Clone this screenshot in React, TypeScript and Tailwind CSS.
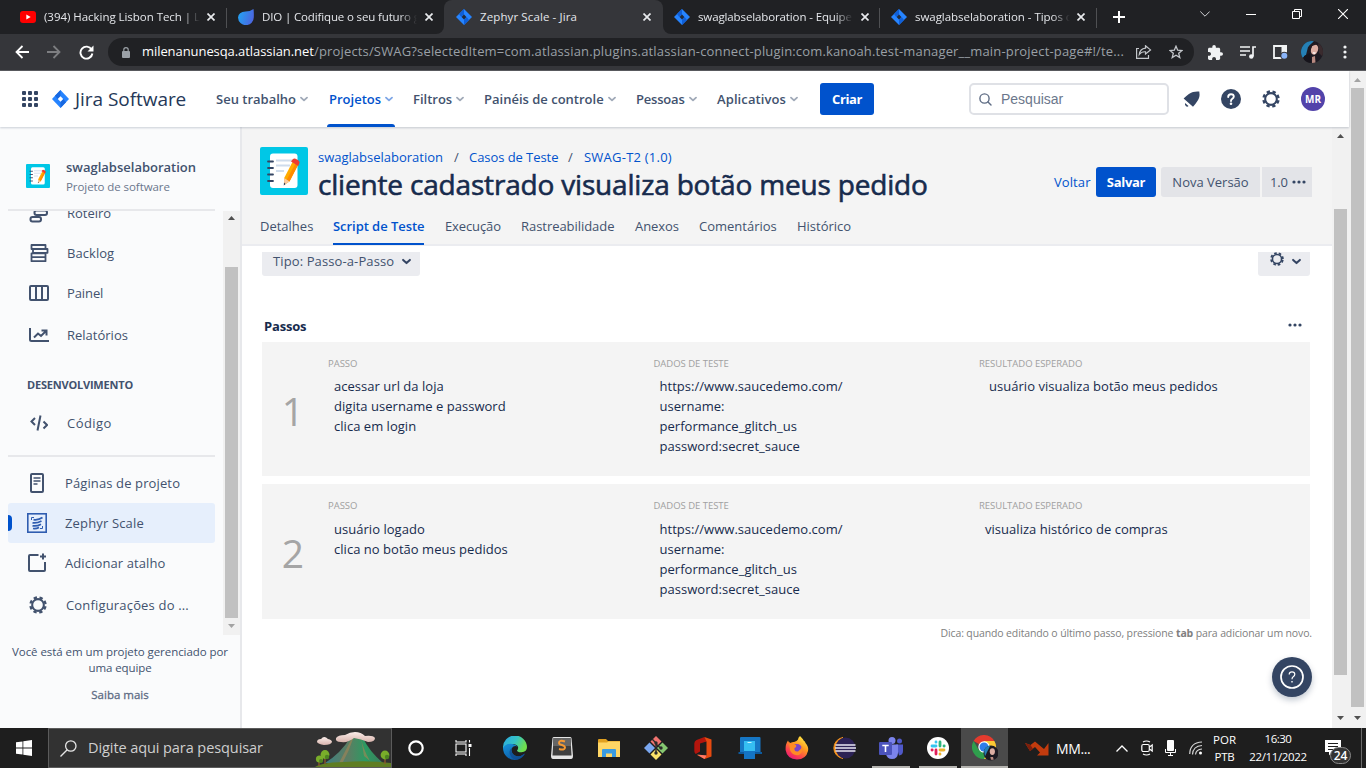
import type { ReactNode } from "react";

const OS = "font-['Open_Sans','Noto_Sans',sans-serif]";

/* ---------- shared icons ---------- */

function JiraTabMark() {
  return (
    <svg width="16" height="16" viewBox="0 0 16 16" className="shrink-0">
      <path d="M8 0L16 8L8 16L0 8Z" fill="#2684ff" />
      <path d="M8 0L8 5.3L5.3 8L3 5Z" fill="#0f5fd8" />
      <path d="M8 16L8 10.7L10.7 8L13 11Z" fill="#0f5fd8" />
      <path d="M8 5.6L10.4 8L8 10.4L5.6 8Z" fill="#202a3c" />
    </svg>
  );
}

function Gear({ size, color = "#344563" }: { size: number; color?: string }) {
  return (
    <svg width={size} height={size} viewBox="0 0 20 20" fill="none" stroke={color} className="shrink-0">
      <circle cx="10" cy="10" r="6.5" strokeWidth="2.3" />
      <circle cx="10" cy="10" r="8.400" strokeWidth="2.600" strokeDasharray="3.700 2.897" strokeDashoffset="-1.450" />
    </svg>
  );
}

function Chevron({ color, size = 8 }: { color: string; size?: number }) {
  return (
    <svg width={size} height={size} viewBox="0 0 8 8" fill="none" stroke={color} strokeWidth="1.800" strokeLinecap="round" strokeLinejoin="round" className="shrink-0">
      <path d="M1 2.6L4 5.4L7 2.6" />
    </svg>
  );
}

function Notebook({ size }: { size: number }) {
  return (
    <svg width={size} height={size} viewBox="0 0 48 48" className="shrink-0">
      <rect width="48" height="48" rx="2" fill="#00c7e6" />
      <rect x="10" y="6.5" width="27.5" height="34.5" rx="3" fill="#fff" />
      <path d="M16 13.5H34M16 18.5H30M16 24H24" stroke="#cfdcec" strokeWidth="1.8" />
      <path d="M8 14.500H13M8 21H13M8 27.500H13M8 34H13" stroke="#344563" strokeWidth="1.8" strokeLinecap="round" />
      <path d="M32.500 15L38 18L29.500 34.500L24 38L24.200 31Z" fill="#ffab00" />
      <path d="M35.500 16.600L38 18L29.500 34.500L26.500 33Z" fill="#ff8b00" />
      <path d="M24.200 31L29.500 34.500L24 38Z" fill="#fbc9a0" />
      <path d="M24 35.500L25.500 37L23.800 38.500Z" fill="#253858" />
      <path d="M31 14.500L33 12Q34.500 11 37 12.500Q40 14 39.500 16L38.200 19Z" fill="#ee3d2f" />
    </svg>
  );
}

function Portrait({ size }: { size: number }) {
  return (
    <svg width={size} height={size} viewBox="0 0 22 22" className="shrink-0">
      <clipPath id="portrait"><circle cx="11" cy="11" r="11" /></clipPath>
      <g clipPath="url(#portrait)">
        <rect width="22" height="22" fill="#1d1a22" />
        <path d="M0 0H13L7 6L5 14L0 18Z" fill="#2580b5" />
        <path d="M17 2L22 6V16L18 12Z" fill="#3a2b2e" />
        <ellipse cx="13.500" cy="8.500" rx="3.600" ry="5.200" fill="#dcaea3" transform="rotate(14 13.500 8.500)" />
        <path d="M8 5Q12 0 17 3L11 5L9 11Z" fill="#221a20" />
        <path d="M11.500 11.200L15 11.500L13 13.200Z" fill="#fff" />
        <path d="M11 16L14 15L14.500 22H11Z" fill="#b88a80" />
        <path d="M3 15L9 12L10 22H3Z" fill="#16141b" />
      </g>
    </svg>
  );
}

function Close() {
  return (
    <svg width="8" height="8" viewBox="0 0 8 8" stroke="#e8eaed" strokeWidth="1.700" className="shrink-0">
      <path d="M0.500 0.500L7.500 7.500M7.500 0.500L0.500 7.500" />
    </svg>
  );
}

function Arrow({ up, color = "#505050" }: { up?: boolean; color?: string }) {
  return (
    <svg width="7" height="4" viewBox="0 0 7 4" className="shrink-0">
      <path d={up ? "M0 4L3.500 0L7 4Z" : "M0 0L3.500 4L7 0Z"} fill={color} />
    </svg>
  );
}

function Dots() {
  return (
    <svg width="14" height="4" viewBox="0 0 14 4" fill="#344563" className="shrink-0">
      <circle cx="2" cy="2" r="1.600" />
      <circle cx="7" cy="2" r="1.600" />
      <circle cx="12" cy="2" r="1.600" />
    </svg>
  );
}

/* ---------- browser chrome ---------- */

function TabStrip() {
  const text = "overflow-hidden whitespace-pre text-[11.5px] leading-4 text-[#e4e6ea]";
  const fade = "[mask-image:linear-gradient(to_right,#000_calc(100%-18px),transparent)]";
  return (
    <div className="flex h-[34px] shrink-0 bg-[#35363a]">
      <div className="flex w-[444px] shrink-0 rounded-br-lg bg-[#202124]">
        <div className="flex w-[226px] items-center pl-5">
          <svg width="16" height="12" viewBox="0 0 16 12" className="shrink-0">
            <rect width="16" height="12" rx="3" fill="#f00" />
            <path d="M6.300 3.500L10.700 6L6.300 8.500Z" fill="#fff" />
          </svg>
          <span className={`${text} ${fade} ml-2 w-[156px] tracking-[-0.04px]`}>(394) Hacking Lisbon Tech | Li</span>
          <span className="ml-[7px]"><Close /></span>
        </div>
        <div className="mt-2 h-5 w-px bg-[#4f5053]" />
        <div className="flex w-[217px] items-center pl-[11px]">
          <svg width="16" height="16" viewBox="0 0 16 16" className="shrink-0">
            <defs>
              <linearGradient id="dio" x1="0" y1="0" x2="1" y2="0.300">
                <stop offset="0" stopColor="#1fa8f5" />
                <stop offset="1" stopColor="#4a68e0" />
              </linearGradient>
            </defs>
            <path d="M7.500 2.500Q12 2.500 15.500 0Q16 3 15.800 8A7.600 7.600 0 0 1 0 8.500Q0.500 3 7.500 2.500Z" fill="url(#dio)" />
          </svg>
          <span className={`${text} ${fade} ml-[8px] w-[155px] tracking-[-0.14px]`}>DIO | Codifique o seu futuro g</span>
          <span className="ml-[8px]"><Close /></span>
        </div>
      </div>
      <div className="w-[219px] shrink-0 bg-[linear-gradient(#202124_50%,#35363a_50%)]">
        <div className="flex h-[34px] items-center rounded-t-lg bg-[#35363a] pl-[12px]">
          <JiraTabMark />
          <span className={`${text} ml-[8px] w-[155px] tracking-[0.11px]`}>Zephyr Scale - Jira</span>
          <span className="ml-[8px]"><Close /></span>
        </div>
      </div>
      <div className="flex flex-1 rounded-bl-lg bg-[#202124]">
        <div className="flex w-[216px] items-center pl-[11px]">
          <JiraTabMark />
          <span className={`${text} ${fade} ml-[8px] w-[155px] tracking-[-0.12px]`}>swaglabselaboration - Equipe</span>
          <span className="ml-[8px]"><Close /></span>
        </div>
        <div className="mt-2 h-5 w-px bg-[#4f5053]" />
        <div className="flex w-[216px] items-center pl-[11px]">
          <JiraTabMark />
          <span className={`${text} ${fade} ml-[8px] w-[155px] tracking-[-0.04px]`}>swaglabselaboration - Tipos d</span>
          <span className="ml-[7px]"><Close /></span>
        </div>
        <div className="mt-2 h-5 w-px bg-[#4f5053]" />
        <svg width="12" height="12" viewBox="0 0 12 12" stroke="#fff" strokeWidth="2" className="ml-4 mt-[11px] shrink-0">
          <path d="M6 0V12M0 6H12" />
        </svg>
        <div className="ml-auto flex h-7 items-center pr-[18px]">
          <svg width="10" height="6" viewBox="0 0 10 6" fill="none" stroke="#d0d2d5" className="mr-9"><path d="M0.300 0.500L5 5.200L9.700 0.500" /></svg>
          <svg width="10" height="10" viewBox="0 0 10 10" stroke="#fff" className="mr-9"><path d="M0 5.500H10" /></svg>
          <svg width="10" height="10" viewBox="0 0 10 10" fill="none" stroke="#fff" className="mr-9"><path d="M0.500 2.500H7.500V9.500H0.500ZM2.500 2.500V0.500H9.500V7.500H7.500" /></svg>
          <svg width="10" height="10" viewBox="0 0 10 10" stroke="#fff" strokeWidth="1.100"><path d="M0 0L10 10M10 0L0 10" /></svg>
        </div>
      </div>
    </div>
  );
}

function Toolbar() {
  return (
    <div className="flex h-[37px] shrink-0 items-center border-b border-[#5a5b5f] bg-[#35363a] pl-[15px]">
      <svg width="14" height="14" viewBox="0 0 14 14" fill="none" stroke="#fff" strokeWidth="1.800"><path d="M14 7H1.500M7.500 1L1.500 7L7.500 13" /></svg>
      <svg width="14" height="14" viewBox="0 0 14 14" fill="none" stroke="#7d7e81" strokeWidth="1.800" className="ml-[18px]"><path d="M0 7H12.500M6.500 1L12.500 7L6.500 13" /></svg>
      <svg width="15" height="15" viewBox="0 0 15 15" fill="none" className="ml-[18px]">
        <path d="M12.600 4.500A6 6 0 1 0 13.400 8.500" stroke="#fff" strokeWidth="1.900" />
        <path d="M14.500 0.500V6.500H8.500Z" fill="#fff" />
      </svg>
      <div className="ml-[14px] flex h-7 w-[1086px] shrink-0 items-center rounded-full bg-[#202124] pl-[14px]">
        <svg width="8" height="11" viewBox="0 0 8 11" className="shrink-0">
          <rect y="4" width="8" height="7" rx="1" fill="#9aa0a6" />
          <path d="M1.800 4.500V2.800A2.200 2.200 0 0 1 6.200 2.800V4.500" stroke="#9aa0a6" strokeWidth="1.200" fill="none" />
        </svg>
        <span className="ml-3 w-[172px] shrink-0 whitespace-nowrap text-[13px] tracking-[-0.07px] text-white">milenanunesqa.atlassian.net</span>
        <span className="w-[822px] shrink-0 whitespace-nowrap text-[13px] tracking-[0.16px] text-[#9aa0a6]">/projects/SWAG?selectedItem=com.atlassian.plugins.atlassian-connect-plugin:com.kanoah.test-manager__main-project-page#!/te...</span>
        <svg width="16" height="14" viewBox="0 0 16 14" fill="none" stroke="#c4c7cb" strokeWidth="1.200" className="shrink-0">
          <path d="M3 3.500H0.600V13.400H12.500V10" />
          <path d="M9.500 0.800L14.500 4.900L9.500 9V6.800Q5.500 6.500 3.300 9.500Q4 3.800 9.500 3.200Z" />
        </svg>
        <svg width="14" height="14" viewBox="0 0 14 14" fill="none" stroke="#c4c7cb" strokeWidth="1.300" className="ml-[17px] shrink-0">
          <path d="M7 1.200L8.700 5.200L13 5.500L9.700 8.300L10.800 12.600L7 10.300L3.200 12.600L4.300 8.300L1 5.500L5.300 5.200Z" />
        </svg>
      </div>
      <svg width="15" height="15" viewBox="2 1 21 21" fill="#f1f3f4" className="ml-[14px] shrink-0">
        <path d="M20.500 11H19V7c0-1.100-.9-2-2-2h-4V3.500a2.500 2.500 0 0 0-5 0V5H4c-1.100 0-2 .9-2 2v3.800h1.500c1.500 0 2.700 1.200 2.700 2.700S5 16.200 3.500 16.200H2V20c0 1.100.9 2 2 2h3.800v-1.500c0-1.500 1.200-2.700 2.700-2.700s2.700 1.200 2.700 2.700V22H17c1.100 0 2-.9 2-2v-4h1.500a2.500 2.500 0 0 0 0-5z" />
      </svg>
      <svg width="16" height="13" viewBox="0 0 16 13" fill="none" stroke="#f1f3f4" strokeWidth="1.700" className="ml-[17px] shrink-0">
        <path d="M0 1H10M0 5H10M0 9H6M13 10.500V1H16" />
        <circle cx="11.300" cy="10.600" r="1.400" fill="#f1f3f4" />
      </svg>
      <svg width="15" height="14" viewBox="0 0 15 14" className="ml-[17px] shrink-0">
        <path d="M1 1H13V13H1Z" fill="none" stroke="#f1f3f4" strokeWidth="1.800" />
        <path d="M8.500 0H14V8H8.500Z" fill="#f1f3f4" />
        <circle cx="11.300" cy="10.700" r="3.900" fill="#35363a" />
        <circle cx="11.300" cy="10.700" r="3" fill="#8ab4f8" />
      </svg>
      <div className="ml-[13px]"><Portrait size={22} /></div>
      <svg width="4" height="14" viewBox="0 0 4 14" fill="#f1f3f4" className="ml-5 shrink-0">
        <circle cx="2" cy="2" r="1.600" /><circle cx="2" cy="7" r="1.600" /><circle cx="2" cy="12" r="1.600" />
      </svg>
    </div>
  );
}

/* ---------- Jira top navigation ---------- */

function NavItem({ width, active, children }: { width: string; active?: boolean; children: ReactNode }) {
  return (
    <div className={`relative flex h-14 shrink-0 items-center gap-1 whitespace-nowrap text-[13px] font-semibold ${width} ${active ? "text-[#0052cc]" : "text-[#42526e]"}`}>
      <span className="pt-[2px]">{children}</span>
      <Chevron color={active ? "#7ea6e6" : "#a0a9b8"} />
      {active && <div className="absolute bottom-0 -left-[2px] h-[3px] w-[68px] rounded-t-sm bg-[#0052cc]" />}
    </div>
  );
}

function TopNav() {
  return (
    <div className="z-10 flex h-[56px] shrink-0 items-center bg-white pl-[22px] shadow-[0_1px_2px_rgba(9,30,66,0.2)]">
      <svg width="16" height="16" viewBox="0 0 16 16" fill="#344563" className="shrink-0">
        {[0, 6, 12].map((y) => [0, 6, 12].map((x) => <rect key={`${x}-${y}`} x={x} y={y} width="4" height="4" rx="1" />))}
      </svg>
      <div className="ml-[14px] flex w-[164px] items-center">
        <svg width="17" height="18" viewBox="0 0 17 18" className="shrink-0">
          <path d="M8.500 0L17 9L8.500 18L0 9Z" fill="#2684ff" />
          <path d="M8.500 0V6L5.700 9L3 5.800Z" fill="#1868e0" />
          <path d="M8.500 18V12L11.300 9L14 12.200Z" fill="#1868e0" />
          <path d="M8.500 6.200L11.200 9L8.500 11.800L5.800 9Z" fill="#fff" />
        </svg>
        <span className="ml-[6px] whitespace-nowrap text-[19px] leading-6 tracking-[-0.05px] text-[#253858]">Jira Software</span>
      </div>
      <NavItem width="w-[113px]">Seu trabalho</NavItem>
      <NavItem width="w-[84px]" active>Projetos</NavItem>
      <NavItem width="w-[71px]">Filtros</NavItem>
      <NavItem width="w-[152px]">Painéis de controle</NavItem>
      <NavItem width="w-[81px] tracking-[-0.2px]">Pessoas</NavItem>
      <NavItem width="w-[103px] tracking-[0.1px]">Aplicativos</NavItem>
      <div className="flex h-8 w-[54px] shrink-0 items-center justify-center rounded-[3px] bg-[#0052cc] pt-[2px] text-[13px] font-bold tracking-[-0.4px] text-white">Criar</div>
      <div className="ml-[95px] flex h-8 w-[200px] shrink-0 items-center rounded-[5px] border-2 border-[#dfe1e6] pl-2 font-['Liberation_Sans',sans-serif] text-sm text-[#6b778c]">
        <svg width="13" height="13" viewBox="0 0 13 13" fill="none" stroke="#5e6c84" strokeWidth="1.400" strokeLinecap="round"><circle cx="5.500" cy="5.500" r="4.600" /><path d="M9 9L12 12" /></svg>
        <span className="ml-[9px]">Pesquisar</span>
      </div>
      <svg width="17" height="17" viewBox="0 0 17 17" fill="#344563" className="ml-[14px] shrink-0">
        <path d="M16.300 0.600Q16.800 4 16.300 6Q15.500 9.500 10 15.800L0.600 7.600Q6.500 1.800 10 1Q13 0.300 16.300 0.600Z" />
        <path d="M2 12L5.500 15Q4.500 16.300 3 15.300Q1.500 14 2 12Z" />
      </svg>
      <svg width="20" height="20" viewBox="0 0 20 20" className="ml-[21px] shrink-0">
        <circle cx="10" cy="10" r="10" fill="#344563" />
        <path d="M7.200 8Q7.200 5.200 10 5.200Q12.800 5.200 12.800 7.600Q12.800 9.100 11.200 9.900Q10 10.500 10 12" fill="none" stroke="#fff" strokeWidth="1.900" strokeLinecap="round" />
        <circle cx="10" cy="14.800" r="1.300" fill="#fff" />
      </svg>
      <span className="ml-[21px]"><Gear size={18} /></span>
      <div className="ml-[21px] flex h-6 w-6 shrink-0 items-center justify-center rounded-full bg-[#5243aa] text-[10px] font-bold text-white">MR</div>
    </div>
  );
}

/* ---------- sidebar ---------- */

const sideText = "whitespace-nowrap text-[13px] leading-5 text-[#42526e]";

function SideItem({ icon, height, textClass, children }: { icon: ReactNode; height: string; textClass: string; children: ReactNode }) {
  return (
    <div className={`flex shrink-0 items-center ${height}`}>
      <div className="flex w-[76px] shrink-0 justify-center">{icon}</div>
      <span className={`${sideText} ${textClass}`}>{children}</span>
    </div>
  );
}

function Sidebar() {
  return (
    <aside className="flex w-[242px] shrink-0 flex-col border-r-2 border-[#e7e8eb] bg-[#fafbfc]">
      <div className="flex h-[82px] shrink-0 items-start pl-[26px] pt-[30px]">
        <div className="mt-[7px]"><Notebook size={24} /></div>
        <div className="ml-4 flex flex-col">
          <span className="text-[13px] font-semibold leading-[20px] text-[#42526e]">swaglabselaboration</span>
          <span className="text-[11.5px] leading-[19px] tracking-[-0.07px] text-[#6b778c]">Projeto de software</span>
        </div>
      </div>
      <div className="ml-2 h-[2px] w-[207px] shrink-0 bg-[#e7e8eb]" />
      <div className="flex h-[424px] shrink-0 overflow-hidden">
        <div className="flex w-[223px] shrink-0 flex-col overflow-hidden">
          <div className="-mt-[18px] flex flex-col">
            <SideItem height="h-[40px]" textClass="ml-[-9px]" icon={
              <svg width="20" height="20" viewBox="0 0 20 20" fill="none" stroke="#42526e" strokeWidth="2"><rect x="6.500" y="7.500" width="12.500" height="4.500" rx="2" /><rect x="2.500" y="14" width="10.500" height="4.500" rx="2" /></svg>
            }>Roteiro</SideItem>
            <SideItem height="h-[40px]" textClass="ml-[-9px] tracking-[0.05px]" icon={
              <svg width="20" height="20" viewBox="0 0 20 20" fill="none" stroke="#42526e" strokeWidth="1.800" strokeLinejoin="round" className="ml-px"><path d="M2.500 2H16.500V6H2.500ZM4 6H18.500V9.800H4ZM2.500 10.300H16.500V14.200H2.500ZM2.500 14.200H16.500V18.200H2.500Z" /></svg>
            }>Backlog</SideItem>
            <SideItem height="h-[40px]" textClass="ml-[-9px] tracking-[-0.1px]" icon={
              <svg width="20" height="16" viewBox="0 0 20 16" fill="none" stroke="#42526e" strokeWidth="2" className="ml-[2px]"><rect x="1" y="1" width="18" height="14" rx="1" /><path d="M7 1V15M13 1V15" /></svg>
            }>Painel</SideItem>
            <SideItem height="h-[44px]" textClass="ml-[-9px]" icon={
              <svg width="20" height="14" viewBox="0 0 20 14" fill="none" stroke="#42526e" strokeWidth="2" className="ml-[2px]"><path d="M1 0V11.500Q1 13 2.500 13H20" /><path d="M5 9.500L9 5.500L12 8L17 3M12.500 2.500H17.500V7.500" /></svg>
            }>Relatórios</SideItem>
            <div className="flex h-[56px] items-center pl-[27px] text-[11px] font-bold tracking-[-0.2px] text-[#42526e]">DESENVOLVIMENTO</div>
            <SideItem height="h-[20px]" textClass="ml-[-9px] tracking-[0.45px]" icon={
              <svg width="18" height="16" viewBox="0 0 18 16" fill="none" stroke="#42526e" strokeWidth="2" className="ml-[2px]"><path d="M5 3L1.500 6.500L5 10M10.500 0.500L7.500 15.500M13.500 6.500L17 10L13.500 13.500" /></svg>
            }>Código</SideItem>
            <div className="ml-2 mt-[22px] h-[2px] w-[207px] bg-[#e7e8eb]" />
            <div className="h-[6px]" />
            <SideItem height="h-[40px]" textClass="ml-[-11px] tracking-[0.12px]" icon={
              <svg width="14" height="20" viewBox="0 0 14 20" fill="none" stroke="#42526e" strokeWidth="2" className="mr-[2px]"><rect x="1" y="1" width="12" height="18" rx="1" /><path d="M3.500 5H10.500M3.500 8H10.500M3.500 11H7.500" strokeWidth="1.500" /></svg>
            }>Páginas de projeto</SideItem>
            <div className="ml-2 flex h-[40px] w-[207px] items-center rounded-[3px] bg-[#e6effc]">
              <div className="h-4 w-1 rounded-r-sm bg-[#0052cc]" />
              <svg width="20" height="20" viewBox="0 0 20 20" fill="none" stroke="#2f5db0" className="ml-[15px] shrink-0">
                <rect x="0.800" y="0.800" width="18.400" height="18.400" strokeWidth="1.600" />
                <path d="M4.500 7V4.500H7M15.500 13V15.500H13" strokeWidth="1" />
                <path d="M6.500 6.600Q11 7.500 15.500 4.500M5.500 9.800Q10 10.500 14.500 8M5.500 12.800Q10 13.500 14 11.200M6 15.500Q9 16 12 14.500" strokeWidth="1.700" />
              </svg>
              <span className={`${sideText} ml-[18px] tracking-[0.15px]`}>Zephyr Scale</span>
            </div>
            <SideItem height="h-[40px]" textClass="ml-[-11px] tracking-[0.1px]" icon={
              <svg width="20" height="20" viewBox="0 0 20 20" fill="none" stroke="#42526e" strokeWidth="2" className="mr-[2px]"><path d="M11.500 2H3Q2 2 2 3V17Q2 18 3 18H17Q18 18 18 17V9" /><path d="M16 0.500V6.500M13 3.500H19" /></svg>
            }>Adicionar atalho</SideItem>
            <SideItem height="h-[44px]" textClass="ml-[-10px] tracking-[0.17px]" icon={<div className="mr-px"><Gear size={18} color="#42526e" /></div>}>Configurações do ...</SideItem>
          </div>
        </div>
        <div className="flex w-[17px] shrink-0 flex-col items-center bg-[#f1f1f1] pt-[5px]">
          <Arrow up />
          <div className="mt-[47px] h-[351px] w-[13px] shrink-0 bg-[#c1c1c1]" />
          <div className="mt-[6px]"><Arrow color="#a3a3a3" /></div>
        </div>
      </div>
      <div className="mt-[9px] flex flex-col items-center whitespace-nowrap text-center text-[11.5px] leading-4 text-[#42526e]">
        <span className="tracking-[-0.06px]">Você está em um projeto gerenciado por</span>
        <span className="tracking-[-0.1px]">uma equipe</span>
        <span className="mt-[11px] text-[#5e6c84] [-webkit-text-stroke:0.3px]">Saiba mais</span>
      </div>
    </aside>
  );
}

/* ---------- main content ---------- */

type Step = { n: string; height: string; gap: string; numPad: string; passo: string[]; dados: string[]; resultado: string; resPad: string };

const steps: Step[] = [
  {
    n: "1", height: "h-[134px]", gap: "mt-[5px]", numPad: "pt-[4px]",
    passo: ["acessar url da loja", "digita username e password", "clica em login"],
    dados: ["https://www.saucedemo.com/", "username:", "performance_glitch_us", "password:secret_sauce"],
    resultado: "usuário visualiza botão meus pedidos", resPad: "pl-[10px]",
  },
  {
    n: "2", height: "h-[135px]", gap: "mt-[6px]", numPad: "pt-[4px]",
    passo: ["usuário logado", "clica no botão meus pedidos"],
    dados: ["https://www.saucedemo.com/", "username:", "performance_glitch_us", "password:secret_sauce"],
    resultado: "visualiza histórico de compras", resPad: "pl-[6px]",
  },
];

function StepColumn({ label, lines, gap, pad, width }: { label: string; lines: string[]; gap: string; pad: string; width: string }) {
  return (
    <div className={`flex shrink-0 flex-col pt-[15px] ${width}`}>
      <span className="whitespace-nowrap text-[9.5px] leading-[14px] tracking-[-0.03px] text-[#a0a0a0]">{label}</span>
      <div className={`flex flex-col whitespace-nowrap text-[13px] leading-5 tracking-[0.03px] text-[#172b4d] ${gap} ${pad}`}>
        {lines.map((l) => <span key={l}>{l}</span>)}
      </div>
    </div>
  );
}

function StepCard({ s }: { s: Step }) {
  return (
    <div className={`flex shrink-0 bg-[#f4f4f4] ${s.height}`}>
      <div className={`flex w-[66px] shrink-0 items-center justify-center pr-[4px] text-[39px] text-[#a5a5a5] ${s.numPad}`}>{s.n}</div>
      <StepColumn label="PASSO" lines={s.passo} gap={s.gap} pad="pl-[6px]" width="w-[325.5px]" />
      <StepColumn label="DADOS DE TESTE" lines={s.dados} gap={s.gap} pad="pl-[6px]" width="w-[325.5px]" />
      <StepColumn label="RESULTADO ESPERADO" lines={[s.resultado]} gap={s.gap} pad={s.resPad} width="w-[320px]" />
    </div>
  );
}

function Main() {
  return (
    <main className="flex w-[1090px] shrink-0 flex-col bg-white">
      <header className="flex h-[119px] shrink-0 flex-col border-b-2 border-[#ebecf0] bg-[#f4f4f4] pl-[18px]">
        <div className="flex h-[84px] pt-5">
          <Notebook size={48} />
          <div className="ml-[10px] flex w-[726px] flex-col whitespace-nowrap">
            <div className="flex h-5 items-center text-[13px] leading-5 text-[#0052cc]">
              <span className="w-[136px]">swaglabselaboration</span>
              <span className="w-[15px] text-[#42526e]">/</span>
              <span className="w-[99px] tracking-[-0.06px]">Casos de Teste</span>
              <span className="w-4 text-[#42526e]">/</span>
              <span className="tracking-[0.23px]">SWAG-T2 (1.0)</span>
            </div>
            <h1 className="-mt-px text-[28px] font-normal leading-9 tracking-[-0.18px] text-[#172b4d] [-webkit-text-stroke:0.6px]">cliente cadastrado visualiza botão meus pedido</h1>
          </div>
          <div className="mt-5 ml-[10px] flex h-[30px] items-center whitespace-nowrap text-[13px] text-[#42526e]">
            <span className="w-[42px] pt-[2px] tracking-[0.09px] text-[#0052cc]">Voltar</span>
            <div className="flex h-[30px] w-[60px] items-center justify-center rounded-[3px] bg-[#0052cc] pt-[2px] font-bold tracking-[-0.3px] text-white">Salvar</div>
            <div className="ml-[5px] flex h-[30px] w-[99px] items-center justify-center rounded-l-[3px] bg-[#e3e4e8] pt-[2px]">Nova Versão</div>
            <div className="ml-[2px] flex h-[30px] w-[50px] items-center bg-[#e3e4e8] pl-2">
              <span className="w-[22px] pt-[2px] tracking-[-0.2px]">1.0</span><Dots />
            </div>
          </div>
        </div>
        <nav className="flex h-[35px] shrink-0 items-center gap-[20px] whitespace-nowrap text-[13px] text-[#42526e]">
          <span className="w-[53px]">Detalhes</span>
          <span className="relative flex h-[35px] w-[92px] items-center font-semibold tracking-[-0.05px] text-[#0052cc]">
            Script de Teste
            <span className="absolute -bottom-px left-0 h-[2px] w-[91px] bg-[#0052cc]" />
          </span>
          <span className="w-[56px] tracking-[-0.12px]">Execução</span>
          <span className="w-[94px] tracking-[-0.05px]">Rastreabilidade</span>
          <span className="w-[44px] tracking-[-0.07px]">Anexos</span>
          <span className="w-[78px]">Comentários</span>
          <span>Histórico</span>
        </nav>
      </header>
      <div className="mt-[6px] flex h-6 shrink-0 justify-between pl-[20px] pr-[22px]">
        <div className="flex w-[158px] items-center rounded-b-[3px] bg-[#ebecf0] pb-[5px] pl-[11px] text-[13px] tracking-[0.11px] text-[#42526e]">
          <span className="w-[129px] whitespace-nowrap">Tipo: Passo-a-Passo</span>
          <Chevron color="#344563" size={9} />
        </div>
        <div className="flex w-[52px] items-start rounded-b-[3px] bg-[#ebecf0] pl-[12px]">
          <Gear size={14} />
          <span className="mt-[5px] ml-[8px]"><Chevron color="#344563" size={9} /></span>
        </div>
      </div>
      <div className="mt-[40px] flex h-[20px] shrink-0 items-center justify-between pl-[22px] pr-[30px]">
        <span className="pt-[2px] text-[13px] font-bold tracking-[-0.19px] text-[#172b4d]">Passos</span>
        <div className="pb-[3px]"><Dots /></div>
      </div>
      <div className="mt-[6px] ml-[20px] flex w-[1048px] flex-col gap-2">
        {steps.map((s) => <StepCard key={s.n} s={s} />)}
      </div>
      <p className="mt-[6px] mr-5 text-right text-[10.5px] leading-4 tracking-[-0.13px] text-[#808080]">
        Dica: quando editando o último passo, pressione <b>tab</b> para adicionar um novo.
      </p>
      <div className="mt-[16px] mr-5 flex h-10 w-10 shrink-0 items-center justify-center self-end rounded-full bg-[#344563] shadow-[0_3px_6px_rgba(9,30,66,0.25)]">
        <svg width="24" height="24" viewBox="0 0 24 24" fill="none" stroke="#fff">
          <circle cx="12" cy="12" r="11" strokeWidth="1.700" />
          <path d="M9.200 9.500Q9.200 6.800 12 6.800Q14.800 6.800 14.800 9.300Q14.800 10.800 13.200 11.800Q12 12.600 12 14.200" strokeWidth="1.200" />
          <path d="M12 16V17.400" strokeWidth="1.400" />
        </svg>
      </div>
    </main>
  );
}

/* ---------- taskbar ---------- */

function Task({ children, open, active }: { children: ReactNode; open?: boolean; active?: boolean }) {
  return (
    <div className={`flex h-10 w-[47px] shrink-0 flex-col items-center ${active ? "bg-[#4a4a4a]" : ""}`}>
      <div className="flex h-[38px] items-center pt-[2px]">{children}</div>
      {active && <div className="h-[2px] w-[47px] bg-[#b5b4b0]" />}
      {open && <div className="h-[2px] w-[38px] bg-[#b5b4b0]" />}
    </div>
  );
}

function Taskbar() {
  return (
    <div className="flex h-10 shrink-0 bg-[#1e1e1e] text-white">
      <div className="flex w-12 shrink-0 items-center justify-center">
        <svg width="16" height="16" viewBox="0 0 16 16" fill="#fff"><path d="M0 2.300L6.500 1.400V7.600H0ZM7.300 1.300L16 0V7.600H7.300ZM0 8.400H6.500V14.600L0 13.700ZM7.300 8.400H16V16L7.300 14.700Z" /></svg>
      </div>
      <div className="flex h-10 w-[344px] shrink-0 items-center border border-[#5b5b5b] bg-[#323232] pl-[11px]">
        <svg width="17" height="17" viewBox="0 0 17 17" fill="none" stroke="#e5e5e5" strokeWidth="1.300" className="shrink-0"><circle cx="10.800" cy="6" r="5.200" /><path d="M7.200 9.800L0.500 16.500" /></svg>
        <span className="ml-[11px] w-[179px] whitespace-nowrap text-[14.5px] tracking-[-0.08px] text-[#cfcfcf]">Digite aqui para pesquisar</span>
        <svg width="76" height="38" viewBox="0 0 76 38" className="ml-[48px] shrink-0">
          <defs>
            <linearGradient id="slope" x1="0" y1="0" x2="1" y2="0"><stop offset="0" stopColor="#3d7f80" /><stop offset="0.400" stopColor="#5c7d63" /><stop offset="0.700" stopColor="#2c9a62" /><stop offset="1" stopColor="#3c7d5c" /></linearGradient>
            <linearGradient id="cloud" x1="0" y1="0" x2="0" y2="1"><stop offset="0" stopColor="#fbeeea" /><stop offset="1" stopColor="#d8b3ac" /></linearGradient>
          </defs>
          <path d="M10 34Q26 24 35 9H48Q54 22 68 34Z" fill="url(#slope)" />
          <path d="M38 10Q34 22 28 33L24 34L37 9ZM46 9Q48 20 55 32L49 27Z" fill="#a58455" opacity="0.600" />
          <path d="M21 9Q23 6 30 6Q35 3 40 3Q46 3 50 7Q58 6 60 9Q60 13 53 13Q46 10 39 9Q33 14 26 13Q20 13 21 9Z" fill="url(#cloud)" />
          <path d="M2 13Q2 10 6 10Q9 6 13 10Q17 11 17 13Q16 16 9 16Q3 15 2 13Z" fill="url(#cloud)" />
          <path d="M0 38Q8 33 30 33Q52 31 76 34V38Z" fill="#5f7d22" />
          <path d="M4 30V37M10 26V35M70 28V35" stroke="#8b5a2b" strokeWidth="1.300" />
          <g fill="#79ad2a"><circle cx="4.500" cy="30" r="3.600" /><circle cx="10" cy="25.500" r="4.400" /><circle cx="70" cy="26" r="4.400" /></g>
          <g fill="#4d8420"><circle cx="6" cy="32" r="2" /><circle cx="12" cy="28" r="2.200" /><circle cx="72" cy="28" r="2.200" /></g>
        </svg>
      </div>
      <Task><svg width="16" height="16" viewBox="0 0 16 16" fill="none" stroke="#fff" strokeWidth="2.200"><circle cx="8" cy="8" r="6.700" /></svg></Task>
      <Task><svg width="17" height="16" viewBox="0 0 17 16" fill="none" stroke="#fff" strokeWidth="1.100" className="ml-[2px]"><path d="M1 4H11V12H1ZM1 0V2.500M1 2H11M11 0V2.500M1 16V13.500M1 14H11M11 16V13.500M14.500 0V2.500M14.500 8V16" /><rect x="13.500" y="4" width="3" height="3" fill="#fff" stroke="none" /></svg></Task>
      <div className="w-[5px] shrink-0" />
      <Task>
        <svg width="24" height="24" viewBox="0 0 24 24">
          <defs>
            <linearGradient id="edgeTop" x1="0" y1="0" x2="1" y2="0.400"><stop offset="0" stopColor="#2aa7e4" /><stop offset="0.550" stopColor="#35c3c6" /><stop offset="1" stopColor="#6fdf4e" /></linearGradient>
            <linearGradient id="edgeLow" x1="0" y1="0" x2="0.600" y2="1"><stop offset="0" stopColor="#1794dc" /><stop offset="1" stopColor="#0c59a4" /></linearGradient>
          </defs>
          <path d="M0 12A12 12 0 0 1 24 11Q24 16 18.500 16.300Q14.500 16.500 14 14.500Q15.500 13 15 10.800Q13.500 8 9.500 8Q3 8 0 13Z" fill="url(#edgeTop)" />
          <path d="M0 12Q3 7 9.500 8Q13 8.500 14.500 10.500Q11 9 9 12Q7.500 16 11 19Q16 22 22 17.500Q18 24 12 24A12 12 0 0 1 0 12Z" fill="url(#edgeLow)" />
          <path d="M9 12Q7.500 16 11 19Q16 22 22 17.500Q19 23.500 13 23.900Q6 21.500 6.500 15.500Q7 12.500 9 12Z" fill="#114a8b" opacity="0.700" />
        </svg>
      </Task>
      <Task>
        <svg width="24" height="22" viewBox="0 0 24 22">
          <path d="M2.500 1Q2.700 0 4 0H20Q21.300 0 21.500 1L23 19Q23 22 21 22H3Q1 22 1 19Z" fill="#e5e5e5" />
          <path d="M3.500 1H20.500L21.500 18.500H2.500Z" fill="#3f3f3f" />
          <path d="M3.500 1H20.500L21 9H3Z" fill="#666" />
          <path d="M15 4.500Q9 2.500 9 6Q9 7.500 12 8Q15 9 15 10.800Q14.500 13.500 9 12" fill="none" stroke="#f79a32" strokeWidth="1.900" />
        </svg>
      </Task>
      <Task>
        <svg width="22" height="18" viewBox="0 0 22 18">
          <path d="M0 1Q0 0 1 0H8L10 2H22V18H0Z" fill="#e0a020" />
          <path d="M0 3.500H9L10.500 2.500H22V18H0Z" fill="#ffd665" />
          <path d="M4 18V11Q4 10 5 10H17Q18 10 18 11V18H14V14.500H8V18Z" fill="#3a9be0" />
        </svg>
      </Task>
      <Task>
        <svg width="24" height="24" viewBox="0 0 24 24">
          <path d="M12 0L17.500 5.500L12 11L6.500 5.500Z" fill="#f0736f" />
          <path d="M5.500 6.500L11 12L5.500 17.500L0 12Z" fill="#7aa7f0" />
          <path d="M18.500 6.500L24 12L18.500 17.500L13 12Z" fill="#86c771" />
          <path d="M12 13L17.500 18.500L12 24L6.500 18.500Z" fill="#fbe36a" />
          <path d="M8 3L12 7V17M12 8L16.500 12" stroke="#2b2b2b" strokeWidth="1.400" fill="none" />
          <circle cx="12" cy="7" r="1.700" fill="#2b2b2b" /><circle cx="12" cy="17" r="1.700" fill="#2b2b2b" /><circle cx="17" cy="12" r="1.700" fill="#2b2b2b" />
        </svg>
      </Task>
      <Task>
        <svg width="18" height="22" viewBox="0 0 18 22">
          <path d="M10.500 0L17.500 2.500V19.500L10.500 22L3 18L12.500 18.500V4.500L10 4Z" fill="#e64a10" />
          <path d="M10.500 0L12.500 4.500L6 6.500V14.500L1.800 17Q0.300 16 0.300 14V6.500Q0.300 4 2.500 3Z" fill="#b3150d" />
          <path d="M3 17.500L12.500 18.500L10.500 22Z" fill="#ff7a66" />
        </svg>
      </Task>
      <Task>
        <svg width="24" height="22" viewBox="0 0 24 22">
          <path d="M2 1Q2 0 3 0H21.500Q22.500 0 22.500 1V15H2Z" fill="#1677c5" />
          <path d="M0.500 15H24V17H0.500Z" fill="#0c5a9e" />
          <path d="M6 3H17V22H6Z" fill="#1474c4" />
          <path d="M6 4H17V14H6Z" fill="#35bdf2" />
          <path d="M9.500 5.500H13.500" stroke="#c9f0ff" />
        </svg>
      </Task>
      <Task>
        <svg width="24" height="24" viewBox="0 0 24 24">
          <defs>
            <linearGradient id="fox" x1="0.800" y1="0" x2="0.200" y2="1"><stop offset="0" stopColor="#fff04a" /><stop offset="0.400" stopColor="#ff9a1f" /><stop offset="0.750" stopColor="#fb3d50" /><stop offset="1" stopColor="#e3157d" /></linearGradient>
          </defs>
          <path d="M15 0Q18 3 19 5Q20 5 20.500 7Q24 11 23 15Q21 23.500 12 23.500Q2 23 0.600 14Q0.300 8 3 4.500L4.500 7.500Q7 5.500 9 6Q12 5 13 3.500Q13 1.500 15 0Z" fill="url(#fox)" />
          <circle cx="12" cy="13" r="5" fill="#7b45c9" />
          <path d="M4 6Q7 9 11 9Q12 11 9.500 12Q9 16 13 15.500Q16 14 17 10Q19 16 14 19Q7 20 5 14Z" fill="#ff8b25" />
        </svg>
      </Task>
      <Task>
        <svg width="24" height="22" viewBox="0 0 24 22">
          <path d="M11 0.500A10.600 10.600 0 0 0 11 21.500A12 12 0 0 1 11 0.500Z" fill="#f7941e" stroke="#f7941e" />
          <ellipse cx="13.500" cy="11" rx="10" ry="10.500" fill="#2c2255" />
          <path d="M3.500 8H23.500M3 11H24M3.500 14H23.500" stroke="#e8e6f2" strokeWidth="1.600" />
        </svg>
      </Task>
      <Task open>
        <svg width="24" height="22" viewBox="0 0 24 22">
          <circle cx="13" cy="3.500" r="3.500" fill="#7b83eb" /><circle cx="20.500" cy="4" r="2.500" fill="#5059c9" />
          <path d="M17 7.500H24V14Q24 18 20 18.500Z" fill="#5059c9" />
          <path d="M7 7.500H19V16Q18.500 22 13 22Q8 22 7 17Z" fill="#7b83eb" />
          <rect y="5" width="13" height="13" rx="1" fill="#4b53bc" />
          <path d="M3.300 8.500H9.700M6.500 8.500V15" stroke="#fff" strokeWidth="1.600" />
        </svg>
      </Task>
      <Task open>
        <svg width="22" height="22" viewBox="0 0 22 22" strokeWidth="2.800" strokeLinecap="round">
          <circle cx="11" cy="11" r="11" fill="#fff" />
          <path d="M9 5V5.200M5 9H9" stroke="#36c5f0" /><path d="M13 5V9M17 9H17.200" stroke="#2eb67d" />
          <path d="M13 13H17M13 17V17.200" stroke="#ecb22e" /><path d="M9 13V17M5 13H5.200" stroke="#e01e5a" />
        </svg>
      </Task>
      <Task active>
        <svg width="26" height="26" viewBox="0 0 26 26">
          <path d="M12 12L1.600 6A12 12 0 0 1 22.400 6Z" fill="#e33b2e" />
          <path d="M12 12V6H22.400A12 12 0 0 1 12 24Z" fill="#fcc934" />
          <path d="M12 12L17.200 15L12 24A12 12 0 0 1 1.600 6L6.800 15Z" fill="#2f9e4d" />
          <circle cx="12" cy="12" r="5.700" fill="#fff" /><circle cx="12" cy="12" r="4.500" fill="#2f7de9" />
          <g transform="translate(11.500 10.500) scale(0.680)">
            <circle cx="11" cy="11" r="11" fill="#1d1a22" /><path d="M1 7Q3 1 10 0L6 8L2 16Z" fill="#2580b5" />
            <ellipse cx="13" cy="9" rx="3.800" ry="5" fill="#dcaea3" /><path d="M10 17H14L15 21H11Z" fill="#b88a80" />
          </g>
        </svg>
      </Task>
      <div className="flex w-[90px] shrink-0 items-center pl-[17px]">
        <svg width="24" height="15" viewBox="0 0 24 15" className="shrink-0">
          <path d="M0 2L5.500 4L10 0.500L16.500 6L19 8L23.500 2V14.500H12L15 11.500L10 6L5 10Z" fill="#c23b0e" />
          <path d="M0 2L5.500 4L8 8L5 10Z" fill="#7d1f0c" />
        </svg>
        <span className="ml-[7px] text-[14px] tracking-[-0.4px]">MM...</span>
      </div>
      <div className="ml-[18px] flex w-[90px] shrink-0 items-center">
        <svg width="12" height="7" viewBox="0 0 12 7" fill="none" stroke="#fff" strokeWidth="1.300"><path d="M0.500 6.500L6 1L11.500 6.500" /></svg>
        <svg width="12" height="16" viewBox="0 0 12 16" fill="none" stroke="#fff" strokeWidth="1.200" className="ml-[13px]"><rect x="0.800" y="4.500" width="7.500" height="7" rx="1.500" /><path d="M8.500 7L11.200 5V11L8.500 9M2 2Q5.500 0 9 2M2 14Q5.500 16 9 14" /></svg>
        <svg width="11" height="16" viewBox="0 0 11 16" fill="none" stroke="#fff" className="ml-[12px]"><rect x="2" y="0" width="7" height="11" rx="1" fill="#fff" stroke="none" /><path d="M0.500 9V12.500H10.500V9M5.500 12.500V15.500M3 15.500H8" /></svg>
        <svg width="14" height="14" viewBox="0 0 14 14" fill="none" stroke="#d5d5d5" strokeWidth="1.200" className="ml-[13px]"><path d="M0.700 13Q1 1.500 13 1M3.500 13.500Q4 5 13 4.500M6.500 13.500Q7 8.500 13 8" /><circle cx="11.500" cy="12" r="1.500" fill="#fff" stroke="none" /></svg>
      </div>
      <div className="flex w-[37px] shrink-0 flex-col items-center pt-[3px] text-[11.5px] leading-[17px]">
        <span>POR</span><span className="tracking-[-0.3px]">PTB</span>
      </div>
      <div className="flex w-[70px] shrink-0 flex-col items-center pt-[2px] text-[11.5px] leading-[18px]">
        <span className="tracking-[-0.5px]">16:30</span><span className="tracking-[-0.34px]">22/11/2022</span>
      </div>
      <div className="relative ml-[12px] mt-3 h-[26px] w-[34px] shrink-0">
        <svg width="16" height="16" viewBox="0 0 16 16"><path d="M0 0H16V12H7L4 15.500V12H0Z" fill="#fff" /><path d="M3 3.500H13M3 6.500H13M3 9.500H9" stroke="#1e1e1e" strokeWidth="1.200" /></svg>
        <div className="absolute left-[5px] top-[7px] flex h-[17px] w-[21px] items-center justify-center rounded-full border border-[#8a8a8a] bg-[#333] text-[12px] font-semibold leading-none tracking-[-0.2px]">24</div>
      </div>
      <div className="ml-auto h-10 w-[5px] shrink-0 border-l border-[#6a6a6a]" />
    </div>
  );
}

export default function App() {
  return (
    <div className={`flex h-[768px] w-[1366px] flex-col overflow-hidden bg-white ${OS}`}>
      <TabStrip />
      <Toolbar />
      <div className="flex h-[657px] shrink-0">
        <div className="flex w-[1349px] shrink-0 flex-col">
          <TopNav />
          <div className="flex h-[601px] shrink-0">
            <Sidebar />
            <Main />
            <div className="flex w-[17px] shrink-0 flex-col items-center bg-[#f1f1f1] pt-[7px]">
              <Arrow up />
              <div className="mt-[71px] h-[466px] w-[13px] shrink-0 bg-[#c1c1c1]" />
              <div className="mt-[41px]"><Arrow /></div>
            </div>
          </div>
        </div>
        <div className="flex w-[17px] shrink-0 flex-col items-center bg-[#f1f1f1] pt-[7px]">
          <Arrow up color="#a3a3a3" />
          <div className="mt-[6px] h-[619px] w-[13px] shrink-0 bg-[#c1c1c1]" />
          <div className="mt-[9px]"><Arrow /></div>
        </div>
      </div>
      <Taskbar />
    </div>
  );
}
